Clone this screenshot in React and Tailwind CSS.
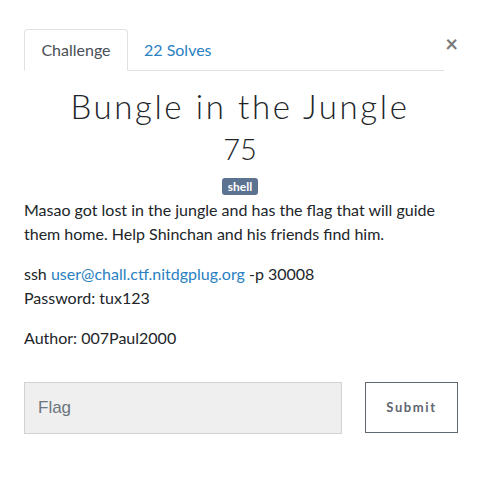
export default function App() {
  return (
    <div className="w-[488px] h-[481px] bg-white font-['Lato','Liberation_Sans',sans-serif] text-[#212529]">
      <div className="pt-[29px] pl-6 pr-[30px]">
        {/* Tabs */}
        <div className="flex items-start">
          <div className="flex w-[420px] border-b border-[#dee2e6] h-[42px]">
            <div className="w-[104px] h-[42px] border border-[#dee2e6] border-b-white rounded-t-[4px] bg-white flex items-center justify-center text-[16px] text-[#495057]">
              Challenge
            </div>
            <div className="px-4 h-[41px] flex items-center text-[16px] text-[#2a81c1]">22 Solves</div>
          </div>
          <div className="ml-auto mt-[4px] text-[#7b7b7b] text-[22px] leading-none font-bold">×</div>
        </div>

        {/* Header */}
        <div className="w-[432px] flex flex-col items-center">
          <h1 className="mt-[16px] text-[33px] leading-[38px] font-light tracking-[2.6px] text-[#212529]">
            Bungle in the Jungle
          </h1>
          <div className="mt-[7px] text-[29px] leading-[34px] font-light">75</div>
          <span className="mt-[12px] px-[6px] h-[17px] rounded-[3px] bg-[#5b7290] text-white text-[12px] font-bold leading-[17px]">
            shell
          </span>
        </div>

        {/* Description */}
        <div className="mt-[3px] text-[16px] leading-[24px]">
          <p>Masao got lost in the jungle and has the flag that will guide them home. Help Shinchan and his friends find him.</p>
          <p className="mt-[16px]">
            ssh <span className="text-[#2a81c1]">user@chall.ctf.nitdgplug.org</span> -p 30008
            <br />
            Password: tux123
          </p>
          <p className="mt-[16px]">Author: 007Paul2000</p>
        </div>

        {/* Flag form */}
        <div className="mt-[32px] flex items-start">
          <div className="w-[318px] h-[52px] bg-[#efefef] border border-[#cfd3d7] flex items-center pl-[13px] text-[17px] text-[#6c757d] font-['Liberation_Sans',sans-serif]">
            Flag
          </div>
          <button className="ml-[23px] w-[93px] h-[51px] border border-[#5f6770] bg-white text-[#5f6770] text-[13px] font-bold tracking-[1.6px]">
            Submit
          </button>
        </div>
      </div>
    </div>
  );
}
